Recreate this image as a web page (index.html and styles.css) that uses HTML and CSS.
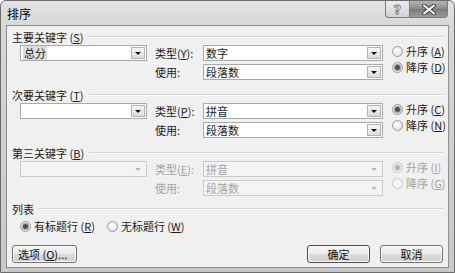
FILE: index.html
```html
<!DOCTYPE html>
<html lang="zh-CN">
<head>
    <meta charset="UTF-8">
    <title>排序</title>
    <link rel="stylesheet" href="styles.css">
</head>
<body>
    <div class="window">
        <div class="titlebar">
            <span class="title">排序</span>
            <div class="caption-buttons">
                <span class="cap-btn help">?</span>
                <span class="cap-btn close">
                    <svg width="14" height="11" viewBox="0 0 14 11">
                        <path d="M2 1.5 L12 9.5 M12 1.5 L2 9.5" stroke="#444" stroke-width="4" stroke-linecap="round"/>
                        <path d="M2 1.5 L12 9.5 M12 1.5 L2 9.5" stroke="#fff" stroke-width="2" stroke-linecap="round"/>
                    </svg>
                </span>
            </div>
        </div>

        <div class="client">
            <section class="group">
                <div class="group-head"><span>主要关键字 (<u>S</u>)</span></div>
                <div class="group-body">
                    <div class="combo key"><span class="value"><span class="selected">总分</span></span><span class="drop"></span></div>
                    <label class="field-label row1">类型(<u>Y</u>):</label>
                    <div class="combo row1"><span class="value">数字</span><span class="drop"></span></div>
                    <label class="field-label row2">使用:</label>
                    <div class="combo row2"><span class="value">段落数</span><span class="drop"></span></div>
                    <div class="radios">
                        <div class="radio"><span class="dot"></span>升序 (<u>A</u>)</div>
                        <div class="radio"><span class="dot checked"></span>降序 (<u>D</u>)</div>
                    </div>
                </div>
            </section>

            <section class="group">
                <div class="group-head"><span>次要关键字 (<u>T</u>)</span></div>
                <div class="group-body">
                    <div class="combo key"><span class="value"></span><span class="drop"></span></div>
                    <label class="field-label row1">类型(<u>P</u>):</label>
                    <div class="combo row1"><span class="value">拼音</span><span class="drop"></span></div>
                    <label class="field-label row2">使用:</label>
                    <div class="combo row2"><span class="value">段落数</span><span class="drop"></span></div>
                    <div class="radios">
                        <div class="radio"><span class="dot checked"></span>升序 (<u>C</u>)</div>
                        <div class="radio"><span class="dot"></span>降序 (<u>N</u>)</div>
                    </div>
                </div>
            </section>

            <section class="group group-last">
                <div class="group-head"><span>第三关键字 (<u>B</u>)</span></div>
                <div class="group-body disabled">
                    <div class="combo key"><span class="value"></span><span class="drop"></span></div>
                    <label class="field-label row1">类型(<u>E</u>):</label>
                    <div class="combo row1"><span class="value">拼音</span><span class="drop"></span></div>
                    <label class="field-label row2">使用:</label>
                    <div class="combo row2"><span class="value">段落数</span><span class="drop"></span></div>
                    <div class="radios">
                        <div class="radio"><span class="dot checked"></span>升序 (<u>I</u>)</div>
                        <div class="radio"><span class="dot"></span>降序 (<u>G</u>)</div>
                    </div>
                </div>
            </section>

            <section class="list-group">
                <div class="group-head"><span>列表</span></div>
                <div class="list-options">
                    <div class="radio"><span class="dot checked"></span>有标题行 (<u>R</u>)</div>
                    <div class="radio"><span class="dot"></span>无标题行 (<u>W</u>)</div>
                </div>
            </section>

            <div class="footer">
                <button class="btn options">选项 (<u>O</u>)...</button>
                <button class="btn ok">确定</button>
                <button class="btn">取消</button>
            </div>
        </div>
    </div>
</body>
</html>
```

FILE: styles.css
```css
html, body {
    margin: 0;
    padding: 0;
}
body {
    font-family: "Noto Sans CJK SC", "Liberation Sans", sans-serif;
    font-size: 11px;
    color: #1a1a1a;
    width: 455px;
    height: 273px;
    overflow: hidden;
}
u {
    text-decoration: underline;
    text-underline-offset: 1px;
}
.window {
    box-sizing: border-box;
    width: 455px;
    height: 273px;
    border: 1px solid #6c6c6c;
    border-radius: 6px 6px 0 0;
    background: linear-gradient(to bottom, #e2e2e2 0, #d6d6d6 30px, #c8c8c8 100%);
    display: flex;
    flex-direction: column;
}
.titlebar {
    height: 24px;
    display: flex;
    align-items: flex-start;
    padding-left: 6px;
    padding-right: 6px;
}
.title {
    line-height: 25px;
    font-size: 12px;
    color: #000;
}
.caption-buttons {
    margin-left: auto;
    display: flex;
}
.cap-btn {
    box-sizing: border-box;
    height: 17px;
    border: 1px solid #7c7c7c;
    border-top: none;
    display: flex;
    align-items: center;
    justify-content: center;
}
.help {
    width: 24px;
    border-right: none;
    border-radius: 0 0 0 4px;
    background: linear-gradient(to bottom, #ececec, #d4d4d4);
    color: #f4f4f4;
    font-family: "DejaVu Sans", sans-serif;
    font-size: 13px;
    font-weight: bold;
    -webkit-text-stroke: 0.8px #707070;
}
.close {
    width: 39px;
    border-radius: 0 0 4px 0;
    background: linear-gradient(to bottom, #b4b4b4, #8a8a8a 50%, #7a7a7a 51%, #9a9a9a);
}
.client {
    flex: 1;
    margin: 0 5px 4px 5px;
    border: 1px solid #8e8e8e;
    background: #f0f0f0;
    padding: 4px 0 0 0;
    display: flex;
    flex-direction: column;
}
.group-head {
    display: flex;
    align-items: center;
    height: 14px;
    padding: 0 5px;
}
.group-head span {
    white-space: nowrap;
    line-height: 14px;
}
.group-head::after {
    content: "";
    flex: 1;
    height: 0;
    border-top: 1px solid #d6d6d6;
    border-bottom: 1px solid #fff;
    margin-left: 5px;
    margin-top: -1px;
}
.group {
    margin-bottom: 8px;
}
.group-last {
    margin-bottom: 6px;
}
.group-body {
    display: grid;
    grid-template-columns: 127px 56px 180px 1fr;
    grid-template-rows: 16px 16px;
    row-gap: 3px;
    margin-top: 1px;
    padding-left: 13px;
}
.combo {
    box-sizing: border-box;
    height: 16px;
    border: 1px solid #a9a9a9;
    background: #fff;
    display: flex;
    align-items: center;
}
.combo.key {
    grid-column: 1;
    grid-row: 1;
}
.combo.row1 {
    grid-column: 3;
    grid-row: 1;
}
.combo.row2 {
    grid-column: 3;
    grid-row: 2;
}
.field-label {
    grid-column: 2;
    padding-left: 8px;
    line-height: 16px;
    white-space: nowrap;
}
.field-label.row1 { grid-row: 1; }
.field-label.row2 { grid-row: 2; }
.value {
    flex: 1;
    padding-left: 2px;
    line-height: 14px;
    white-space: nowrap;
    overflow: hidden;
}
.selected {
    background: #dcdcdc;
    padding: 0 1px;
}
.drop {
    box-sizing: border-box;
    width: 14px;
    height: 12px;
    margin-right: 1px;
    border: 1px solid #b3b3b3;
    background: linear-gradient(to bottom, #f6f6f6, #dcdcdc);
    display: flex;
    align-items: center;
    justify-content: center;
}
.drop::before {
    content: "";
    border-left: 3px solid transparent;
    border-right: 3px solid transparent;
    border-top: 3px solid #111;
    margin-top: 1px;
}
.radios {
    grid-column: 4;
    grid-row: 1 / span 2;
    margin-top: -2px;
    padding-left: 9px;
    display: flex;
    flex-direction: column;
}
.radio {
    display: flex;
    align-items: center;
    height: 16px;
    white-space: nowrap;
}
.dot {
    box-sizing: border-box;
    width: 11px;
    height: 11px;
    border-radius: 50%;
    border: 1px solid #9a9a9a;
    background: radial-gradient(circle at 40% 40%, #ffffff 0, #e8e8e8 60%, #d2d2d2 100%);
    margin-right: 3px;
    flex: none;
}
.dot.checked {
    background: radial-gradient(circle, #3c3c3c 0, #5a5a5a 2px, #9a9a9a 3px, #e8e8e8 4px, #d6d6d6 100%);
}
.disabled {
    color: #a3a3a3;
}
.disabled .combo {
    border-color: #cacaca;
    background: #f4f4f4;
}
.disabled .drop {
    border-color: transparent;
    background: none;
}
.disabled .drop::before {
    border-top-color: #b8b8b8;
}
.disabled .dot {
    border-color: #c8c8c8;
    background: #f4f4f4;
}
.disabled .dot.checked {
    background: radial-gradient(circle, #b0b0b0 0, #b8b8b8 2px, #d0d0d0 3px, #f2f2f2 4px, #eeeeee 100%);
}
.list-options {
    display: flex;
    gap: 12px;
    margin-top: 2px;
    padding-left: 13px;
}
.footer {
    display: flex;
    margin-top: 11px;
    padding: 0 5px;
}
.btn {
    box-sizing: border-box;
    height: 18px;
    width: 63px;
    margin-left: 10px;
    padding: 0;
    border: 1px solid #707070;
    border-radius: 3px;
    background: linear-gradient(to bottom, #f4f4f4 0, #ebebeb 50%, #dcdcdc 51%, #cfcfcf 100%);
    font-family: inherit;
    font-size: 11px;
    color: #111;
    box-shadow: inset 0 0 0 1px #fbfbfb;
}
.btn.options {
    width: 65px;
    margin-left: 0;
    text-align: left;
    padding-left: 5px;
}
.btn.ok {
    margin-left: auto;
    border-color: #4a4a4a;
}
```
